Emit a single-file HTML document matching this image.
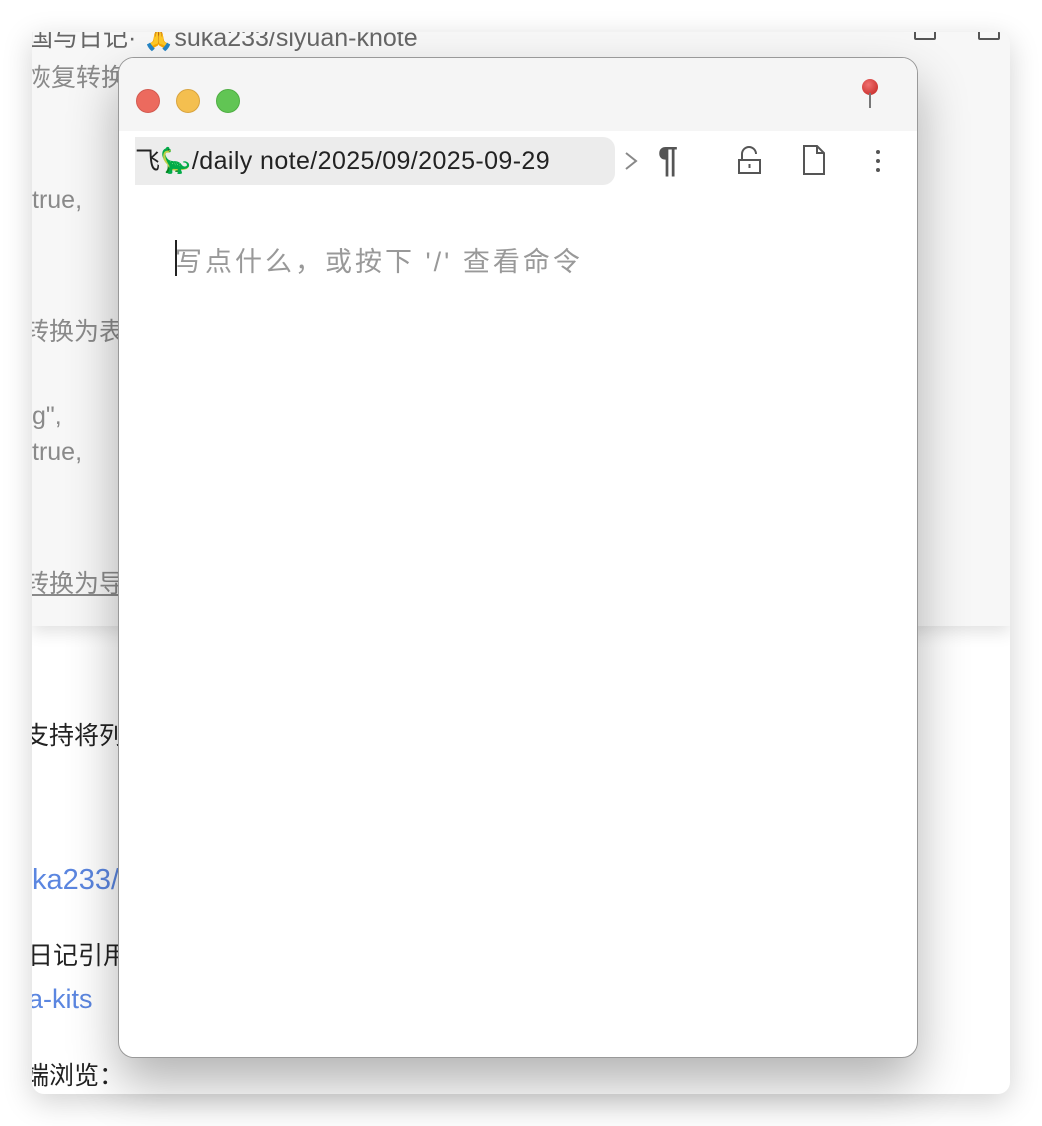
<!DOCTYPE html>
<html><head><meta charset="utf-8"><style>
*{margin:0;padding:0;box-sizing:border-box}
body{width:1042px;height:1126px;background:#fff;position:relative;overflow:hidden;font-family:"Liberation Sans","Noto Sans CJK SC",sans-serif}
.bg{position:absolute;left:32px;top:32px;width:978px;height:1062px;background:#fff;border-radius:0 12px 12px 12px;box-shadow:0 8px 30px rgba(0,0,0,.18);overflow:hidden}
.panel{position:absolute;left:0;top:0;width:978px;height:594px;background:#f7f7f7;box-shadow:0 6px 16px rgba(0,0,0,.12)}
.t{position:absolute;white-space:nowrap;font-size:25px}
.g{color:#8a8a8a}.k{color:#222}.b{color:#5b86e0}
.pop{position:absolute;left:118px;top:57px;width:800px;height:1001px;background:#fff;border:1px solid #999;border-radius:16px;overflow:hidden;box-shadow:0 25px 50px rgba(0,0,0,.3)}
.tb{height:73px;background:#f5f5f5;position:relative}
.dot{position:absolute;top:31px;width:24px;height:24px;border-radius:50%}
.crumb{position:absolute;left:16px;top:79px;width:480px;height:48px;background:#ececec;border-radius:0 12px 12px 0;font-size:25px;color:#222;line-height:48px;white-space:nowrap;letter-spacing:0.4px}
.ph{position:absolute;left:56px;top:182px;font-size:27px;color:#999;letter-spacing:3px}
.cur{position:absolute;left:56px;top:182px;width:2px;height:36px;background:#222}
</style></head><body>
<div class="bg">
 <div class="panel">
  <div class="t g" style="left:-4px;top:-14px;color:#666">国与日记· 🙏suka233/siyuan-knote</div>
  <div class="t g" style="left:-6px;top:26px">恢复转换</div>
  <div class="t g" style="left:0;top:154px">true,</div>
  <div class="t g" style="left:-8px;top:280px">转换为表</div>
  <div class="t g" style="left:0;top:370px">g",</div>
  <div class="t g" style="left:0;top:406px">true,</div>
  <div class="t g" style="left:-8px;top:532px;text-decoration:underline">转换为导</div>
  <div style="position:absolute;left:882px;top:-14px;width:22px;height:22px;border:2px solid #555;border-radius:2px"></div>
  <div style="position:absolute;left:946px;top:-14px;width:22px;height:22px;border:2px solid #555;border-radius:2px"></div>
 </div>
 <div class="t k" style="left:-8px;top:684px">支持将列</div>
 <div class="t b" style="left:0;top:832px;font-size:29px">ka233/</div>
 <div class="t k" style="left:-4px;top:904px">日记引用</div>
 <div class="t b" style="left:-4px;top:952px;font-size:27px">a-kits</div>
 <div class="t k" style="left:-8px;top:1024px">端浏览：</div>
</div>
<div class="pop">
 <div class="tb">
  <div class="dot" style="left:17px;background:#ec6a5e;border:1px solid #d35a50"></div>
  <div class="dot" style="left:57px;background:#f4bf4f;border:1px solid #d9a43f"></div>
  <div class="dot" style="left:97px;background:#61c554;border:1px solid #4fae43"></div>
  <div style="position:absolute;left:743px;top:21px;width:16px;height:16px;border-radius:50%;background:radial-gradient(circle at 40% 35%,#f07070,#c0201c)"></div>
  <div style="position:absolute;left:750px;top:35px;width:2px;height:15px;background:#777"></div>
 </div>
 <div class="crumb">飞🦕/daily note/2025/09/2025-09-29</div>
 <svg style="position:absolute;left:505px;top:92px" width="14" height="22" viewBox="0 0 14 22" fill="none" stroke="#888" stroke-width="2"><path d="M2 3l10 8-10 8"/></svg>
 <div style="position:absolute;left:539px;top:80px;font-size:36px;color:#555;line-height:44px;font-weight:bold">¶</div>
 <svg style="position:absolute;left:618px;top:88px" width="26" height="30" viewBox="0 0 26 30" fill="none" stroke="#555" stroke-width="2"><rect x="2" y="14" width="21" height="13"/><path d="M5 14V8a7 7 0 0 1 14 0"/><path d="M12.5 18v4"/></svg>
 <svg style="position:absolute;left:682px;top:86px" width="26" height="32" viewBox="0 0 26 32" fill="none" stroke="#555" stroke-width="2"><path d="M3 2h13l7 7v21H3z"/><path d="M16 2v7h7"/></svg>
 <svg style="position:absolute;left:754px;top:90px" width="10" height="26"><circle cx="5" cy="4" r="2" fill="#555"/><circle cx="5" cy="13" r="2" fill="#555"/><circle cx="5" cy="22" r="2" fill="#555"/></svg>
 <div class="cur"></div>
 <div class="ph">写点什么，或按下 '/' 查看命令</div>
</div>
</body></html>
